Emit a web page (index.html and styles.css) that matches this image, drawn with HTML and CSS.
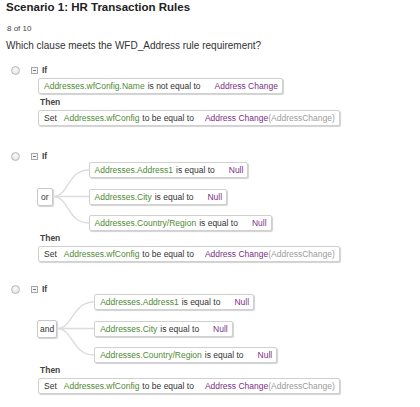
FILE: index.html
```html
<!DOCTYPE html>
<html>
<head>
<meta charset="utf-8">
<link rel="stylesheet" href="styles.css">
</head>
<body>
<div class="page">
  <h1 class="title">Scenario 1: HR Transaction Rules</h1>
  <div class="count">8 of 10</div>
  <p class="question">Which clause meets the WFD_Address rule requirement?</p>

  <div class="option opt1">
    <div class="if-row">
      <span class="radio"></span>
      <span class="toggle"></span>
      <span class="kw">If</span>
    </div>
    <div class="body">
      <div class="clause cond-single"><span class="fld">Addresses.wfConfig.Name</span><span class="op-txt">is not equal to</span><span class="val">Address Change</span></div>
      <div class="kw then">Then</div>
      <div class="clause set"><span class="set-kw">Set</span><span class="fld">Addresses.wfConfig</span><span class="op-txt">to be equal to</span><span class="val">Address Change<span class="arg">(AddressChange)</span></span></div>
    </div>
  </div>

  <div class="option opt2">
    <div class="if-row">
      <span class="radio"></span>
      <span class="toggle"></span>
      <span class="kw">If</span>
    </div>
    <div class="body">
      <div class="group">
        <div class="logic or">or</div>
        <svg class="links links-or" viewBox="0 0 36 69" width="36" height="69">
          <path d="M0 34.5 C16 34.5 14 8 36 8" />
          <path d="M0 34.5 L36 34.5" />
          <path d="M0 34.5 C16 34.5 14 61 36 61" />
        </svg>
        <div class="branches">
          <div class="clause"><span class="fld">Addresses.Address1</span><span class="op-txt">is equal to</span><span class="val">Null</span></div>
          <div class="clause"><span class="fld">Addresses.City</span><span class="op-txt">is equal to</span><span class="val">Null</span></div>
          <div class="clause"><span class="fld">Addresses.Country/Region</span><span class="op-txt">is equal to</span><span class="val">Null</span></div>
        </div>
      </div>
      <div class="kw then">Then</div>
      <div class="clause set"><span class="set-kw">Set</span><span class="fld">Addresses.wfConfig</span><span class="op-txt">to be equal to</span><span class="val">Address Change<span class="arg">(AddressChange)</span></span></div>
    </div>
  </div>

  <div class="option opt3">
    <div class="if-row">
      <span class="radio"></span>
      <span class="toggle"></span>
      <span class="kw">If</span>
    </div>
    <div class="body">
      <div class="group">
        <div class="logic and">and</div>
        <svg class="links links-and" viewBox="0 0 37 69" width="37" height="69">
          <path d="M0 34.5 C16 34.5 15 8 37 8" />
          <path d="M0 34.5 L37 34.5" />
          <path d="M0 34.5 C16 34.5 15 61 37 61" />
        </svg>
        <div class="branches">
          <div class="clause"><span class="fld">Addresses.Address1</span><span class="op-txt">is equal to</span><span class="val">Null</span></div>
          <div class="clause"><span class="fld">Addresses.City</span><span class="op-txt">is equal to</span><span class="val">Null</span></div>
          <div class="clause"><span class="fld">Addresses.Country/Region</span><span class="op-txt">is equal to</span><span class="val">Null</span></div>
        </div>
      </div>
      <div class="kw then">Then</div>
      <div class="clause set"><span class="set-kw">Set</span><span class="fld">Addresses.wfConfig</span><span class="op-txt">to be equal to</span><span class="val">Address Change<span class="arg">(AddressChange)</span></span></div>
    </div>
  </div>
</div>
</body>
</html>
```

FILE: styles.css
```css
html, body {
  margin: 0;
  padding: 0;
  background: #ffffff;
}

body {
  font-family: "Liberation Sans", Arial, sans-serif;
  color: #333333;
  width: 420px;
  height: 407px;
  overflow: hidden;
}

.page {
  padding: 0 0 0 6px;
}

.title {
  margin: 0;
  font-size: 11.5px;
  line-height: 14px;
  font-weight: bold;
  color: #222222;
}

.count {
  margin: 10px 0 0 1px;
  font-size: 8px;
  line-height: 10px;
  color: #444444;
}

.question {
  margin: 6px 0 0 0;
  font-size: 10px;
  line-height: 12px;
  color: #333333;
}

.option {
  display: flex;
  flex-direction: column;
}

.opt1 { margin-top: 13px; }
.opt2 { margin-top: 25px; }
.opt3 { margin-top: 22px; }

.if-row {
  display: flex;
  align-items: center;
  height: 10px;
}

.radio {
  width: 7px;
  height: 7px;
  margin-left: 5px;
  border-radius: 50%;
  border: 1px solid #b8b8b8;
  background: radial-gradient(circle at 50% 40%, #fafafa 0%, #e6e6e6 70%);
}

.toggle {
  position: relative;
  width: 5px;
  height: 5px;
  margin-left: 11px;
  border: 1px solid #a8a8a8;
  background: #f4f4f4;
}

.toggle::after {
  content: "";
  position: absolute;
  left: 1px;
  top: 2px;
  width: 3px;
  height: 1px;
  background: #777777;
}

.kw {
  font-size: 8.5px;
  font-weight: bold;
  color: #444444;
  line-height: 10px;
}

.if-row .kw {
  margin-left: 4px;
}

.body {
  display: flex;
  flex-direction: column;
  align-items: flex-start;
  padding-left: 32px;
}

.clause {
  display: flex;
  align-items: center;
  height: 14px;
  padding: 0 4px 0 5px;
  border: 1px solid #d0d0d0;
  border-radius: 2px;
  background: #ffffff;
  box-shadow: 1px 1px 1px rgba(0, 0, 0, 0.18);
  font-size: 8.5px;
  white-space: nowrap;
}

.cond-single {
  margin-top: 3px;
}

.fld {
  color: #4f8a34;
}

.op-txt {
  margin-left: 3px;
  color: #333333;
}

.val {
  margin-left: 14px;
  color: #7d2f86;
}

.set .val {
  margin-left: 11px;
}

.arg {
  color: #9c9c9c;
}

.set-kw {
  margin-right: 7px;
  color: #333333;
}

.then {
  margin-top: 1px;
  line-height: 14px;
  padding-left: 2px;
}

.group + .then {
  margin-top: 0;
}

.set {
  margin-top: 1px;
}

.group {
  display: flex;
  align-items: center;
  margin-left: -1px;
  margin-top: 1px;
}

.opt3 .group {
  margin-top: 0;
}

.logic {
  display: flex;
  align-items: center;
  justify-content: center;
  height: 16px;
  border: 1px solid #c8c8c8;
  border-radius: 2px;
  box-shadow: 1px 1px 1px rgba(0, 0, 0, 0.18);
  font-size: 8.5px;
  color: #333333;
  padding: 0 3px;
}

.logic.and {
  padding: 0 2px;
}

.links {
  display: block;
  flex: none;
}

.links path {
  fill: none;
  stroke: #dcdcdc;
  stroke-width: 1.4;
}

.branches {
  display: flex;
  flex-direction: column;
  align-items: flex-start;
  gap: 10.5px;
}
```
